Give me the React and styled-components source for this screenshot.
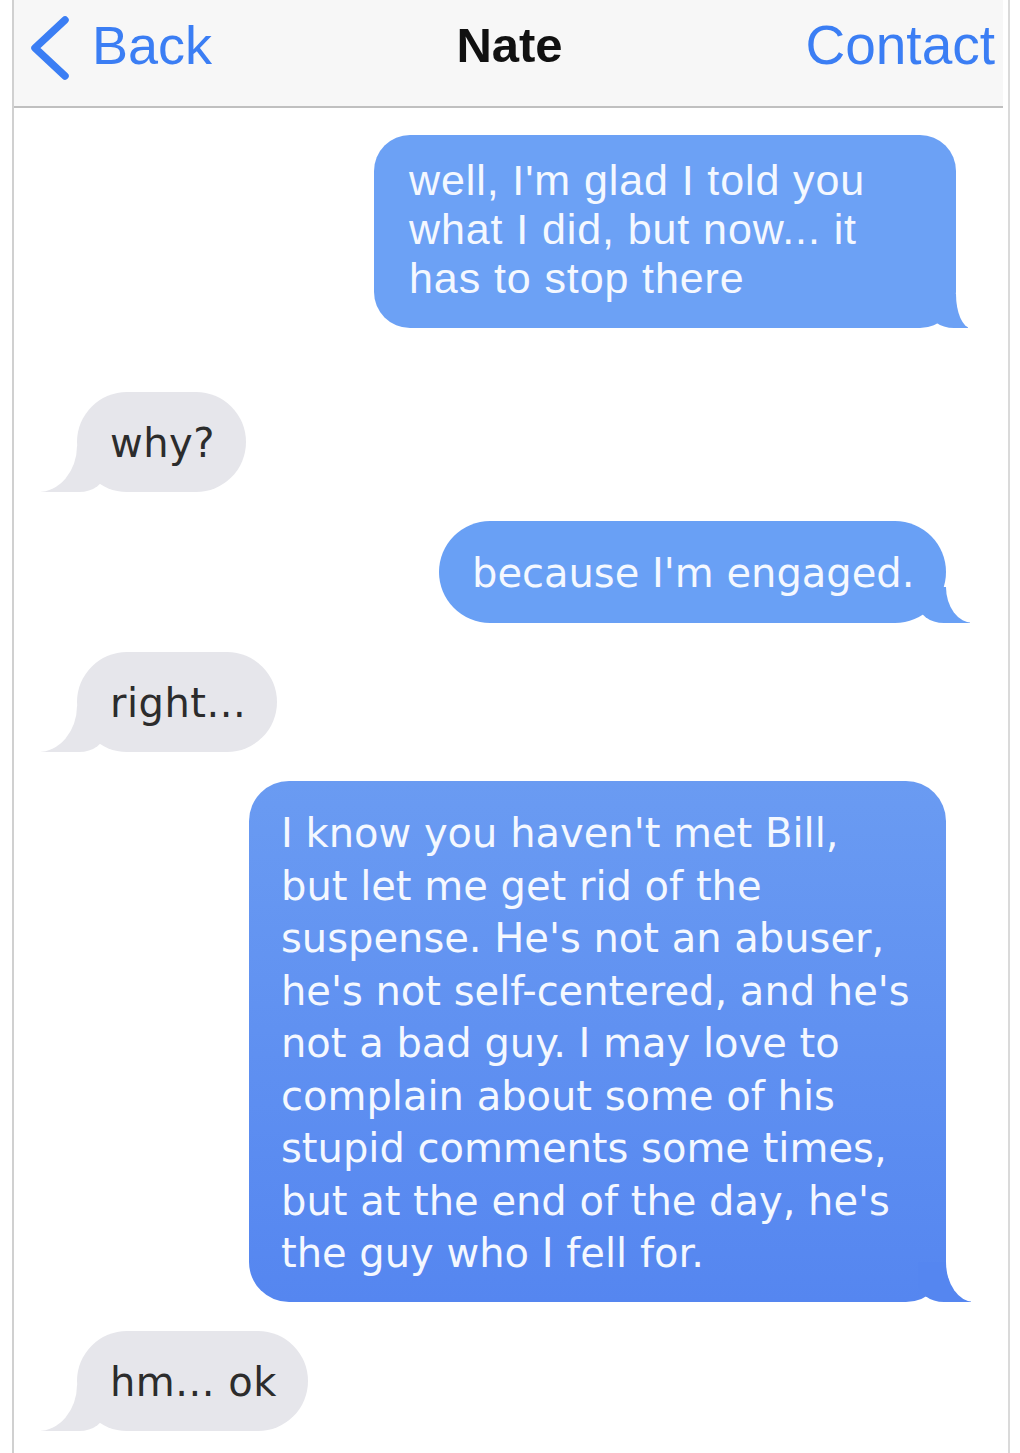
import styled, { createGlobalStyle } from "styled-components";

const GlobalStyle = createGlobalStyle`
  *, *::before, *::after { box-sizing: border-box; }
  body {
    margin: 0;
    background: #ffffff;
    font-family: "Liberation Sans", Arial, sans-serif;
  }
`;

const Page = styled.div`
  width: 1020px;
  min-height: 1453px;
  background: #ffffff;
`;

const Frame = styled.div`
  margin-left: 12px;
  width: 998px;
  min-height: 1453px;
  border-left: 2px solid #d0d0d0;
  border-right: 2px solid #dadada;
`;

const Header = styled.header`
  height: 108px;
  margin-right: 5px;
  padding: 0 8px 16px 16px;
  background: #f7f7f7;
  border-bottom: 2px solid #c0c0c0;
  display: grid;
  grid-template-columns: 1fr auto 1fr;
  align-items: center;
`;

const BackLink = styled.div`
  display: flex;
  align-items: center;
  gap: 22px;
  color: #3b7ef4;
  font-size: 54px;

  svg {
    width: 40px;
    height: 64px;
    margin-top: 6px;
  }
`;

const Title = styled.div`
  margin-left: -6px;
  font-size: 49px;
  font-weight: bold;
  color: #111111;
`;

const ContactLink = styled.div`
  justify-self: end;
  color: #3b7ef4;
  font-size: 55px;
`;

const Thread = styled.main`
  display: flex;
  flex-direction: column;
  padding: 27px 0 20px;
`;

const Bubble = styled.div`
  position: relative;
  align-self: ${(p) => (p.$mine ? "flex-end" : "flex-start")};
  margin: ${(p) => (p.$mine ? `0 ${p.$edge}px 0 0` : `0 0 0 ${p.$edge}px`)};
  margin-bottom: ${(p) => p.$after}px;
  width: ${(p) => (p.$w ? `${p.$w}px` : "auto")};
  padding: ${(p) => p.$pad};
  border-radius: ${(p) => p.$radius}px;
  background: ${(p) => p.$bg};
  color: ${(p) => (p.$mine ? "#f4f8ff" : "#2c2c2c")};
  font-family: ${(p) => p.$font};
  font-size: ${(p) => p.$size}px;
  line-height: ${(p) => p.$lh}px;
  letter-spacing: ${(p) => p.$track || 0}px;
  white-space: nowrap;

  &::before {
    content: "";
    position: absolute;
    bottom: 0;
    height: ${(p) => p.$tailH}px;
    width: ${(p) => p.$tip + 28}px;
    background: ${(p) => p.$tailColor};
    ${(p) =>
      p.$mine
        ? `right: -${p.$tip}px; border-bottom-left-radius: 26px 20px;`
        : `left: -${p.$tip}px; border-bottom-right-radius: 26px 20px;`}
  }

  &::after {
    content: "";
    position: absolute;
    bottom: 0;
    height: ${(p) => p.$tailH + 2}px;
    width: ${(p) => p.$tip + 18}px;
    background: #ffffff;
    ${(p) =>
      p.$mine
        ? `right: -${p.$tip + 18}px; border-bottom-left-radius: ${p.$tip + 3}px ${p.$tailH}px;`
        : `left: -${p.$tip + 18}px; border-bottom-right-radius: ${p.$tip + 3}px ${p.$tailH}px;`}
  }
`;

const Text = styled.span`
  position: relative;
  z-index: 1;
`;

const Chevron = () => (
  <svg viewBox="0 0 40 64" fill="none">
    <path
      d="M35 4 L5 32 L35 60"
      stroke="#3b7ef4"
      strokeWidth="7.5"
      strokeLinecap="round"
      strokeLinejoin="round"
    />
  </svg>
);

const SANS = `"Liberation Sans", Arial, sans-serif`;
const VERD = `"DejaVu Sans", Verdana, sans-serif`;

const grey = {
  $edge: 63,
  $pad: "26px 31px 24px 33px",
  $radius: 50,
  $bg: "#e6e6eb",
  $tailColor: "#e6e6eb",
  $font: VERD,
  $size: 40,
  $lh: 50,
  $track: 0.5,
  $tip: 36,
  $tailH: 46,
  $after: 29,
};

const messages = [
  {
    mine: true,
    props: {
      $edge: 52,
      $w: 582,
      $pad: "21px 20px 25px 35px",
      $radius: 36,
      $bg: "#6ca1f5",
      $tailColor: "#6ca1f5",
      $font: SANS,
      $size: 43,
      $lh: 49,
      $track: 0.9,
      $tip: 12,
      $tailH: 34,
      $after: 64,
    },
    lines: ["well, I'm glad I told you", "what I did, but now... it", "has to stop there"],
  },
  { mine: false, props: grey, lines: ["why?"] },
  {
    mine: true,
    props: {
      $edge: 62,
      $w: 507,
      $pad: "26px 20px 24px 33px",
      $radius: 51,
      $bg: "#69a0f5",
      $tailColor: "#69a0f5",
      $font: VERD,
      $size: 40,
      $lh: 52,
      $tip: 24,
      $tailH: 36,
      $after: 29,
    },
    lines: ["because I'm engaged."],
  },
  { mine: false, props: grey, lines: ["right..."] },
  {
    mine: true,
    props: {
      $edge: 62,
      $w: 697,
      $pad: "26px 20px 22px 32px",
      $radius: 40,
      $bg: "linear-gradient(180deg, #6a9bf2 0%, #5586f0 100%)",
      $tailColor: "#5586f0",
      $font: VERD,
      $size: 40,
      $lh: 52.5,
      $tip: 25,
      $tailH: 40,
      $after: 29,
    },
    lines: [
      "I know you haven't met Bill,",
      "but let me get rid of the",
      "suspense. He's not an abuser,",
      "he's not self-centered, and he's",
      "not a bad guy. I may love to",
      "complain about some of his",
      "stupid comments some times,",
      "but at the end of the day, he's",
      "the guy who I fell for.",
    ],
  },
  { mine: false, props: grey, lines: ["hm... ok"] },
];

export default function App() {
  return (
    <Page>
      <GlobalStyle />
      <Frame>
        <Header>
          <BackLink>
            <Chevron />
            Back
          </BackLink>
          <Title>Nate</Title>
          <ContactLink>Contact</ContactLink>
        </Header>
        <Thread>
          {messages.map((m, i) => (
            <Bubble key={i} $mine={m.mine} {...m.props}>
              <Text>
                {m.lines.map((line, j) => (
                  <span key={j}>
                    {line}
                    {j < m.lines.length - 1 && <br />}
                  </span>
                ))}
              </Text>
            </Bubble>
          ))}
        </Thread>
      </Frame>
    </Page>
  );
}
